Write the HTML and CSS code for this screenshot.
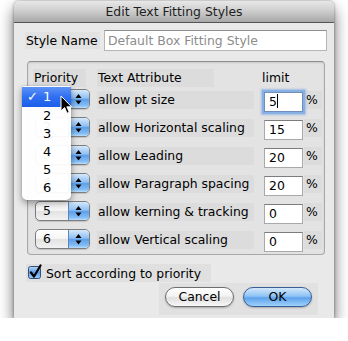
FILE: index.html
```html
<!DOCTYPE html>
<html>
<head>
<meta charset="utf-8">
<link rel="stylesheet" href="styles.css">
</head>
<body>
<div class="window">
  <div class="titlebar">Edit Text Fitting Styles</div>

  <div class="name-row">
    <span class="name-label">Style Name</span>
    <div class="name-field">Default Box Fitting Style</div>
  </div>

  <div class="group">
    <div class="head">
      <span class="h-priority">Priority</span>
      <span class="h-attr">Text Attribute</span>
      <span class="h-limit">limit</span>
    </div>

    <div class="row">
      <div class="popup"><span class="pv">1</span><span class="arrows"><svg width="21" height="18" viewBox="0 0 21 18"><polygon points="7.5,8 10.5,4 13.5,8" fill="#000"/><polygon points="7.5,10.5 10.5,14.5 13.5,10.5" fill="#000"/></svg></span></div>
      <span class="attr">allow pt size</span>
      <div class="num focused">5<span class="caret"></span></div>
      <span class="pct">%</span>
    </div>
    <div class="row">
      <div class="popup"><span class="pv">2</span><span class="arrows"><svg width="21" height="18" viewBox="0 0 21 18"><polygon points="7.5,8 10.5,4 13.5,8" fill="#000"/><polygon points="7.5,10.5 10.5,14.5 13.5,10.5" fill="#000"/></svg></span></div>
      <span class="attr">allow Horizontal scaling</span>
      <div class="num">15</div>
      <span class="pct">%</span>
    </div>
    <div class="row">
      <div class="popup"><span class="pv">3</span><span class="arrows"><svg width="21" height="18" viewBox="0 0 21 18"><polygon points="7.5,8 10.5,4 13.5,8" fill="#000"/><polygon points="7.5,10.5 10.5,14.5 13.5,10.5" fill="#000"/></svg></span></div>
      <span class="attr">allow Leading</span>
      <div class="num">20</div>
      <span class="pct">%</span>
    </div>
    <div class="row">
      <div class="popup"><span class="pv">4</span><span class="arrows"><svg width="21" height="18" viewBox="0 0 21 18"><polygon points="7.5,8 10.5,4 13.5,8" fill="#000"/><polygon points="7.5,10.5 10.5,14.5 13.5,10.5" fill="#000"/></svg></span></div>
      <span class="attr">allow Paragraph spacing</span>
      <div class="num">20</div>
      <span class="pct">%</span>
    </div>
    <div class="row">
      <div class="popup"><span class="pv">5</span><span class="arrows"><svg width="21" height="18" viewBox="0 0 21 18"><polygon points="7.5,8 10.5,4 13.5,8" fill="#000"/><polygon points="7.5,10.5 10.5,14.5 13.5,10.5" fill="#000"/></svg></span></div>
      <span class="attr">allow kerning &amp; tracking</span>
      <div class="num">0</div>
      <span class="pct">%</span>
    </div>
    <div class="row last">
      <div class="popup"><span class="pv">6</span><span class="arrows"><svg width="21" height="18" viewBox="0 0 21 18"><polygon points="7.5,8 10.5,4 13.5,8" fill="#000"/><polygon points="7.5,10.5 10.5,14.5 13.5,10.5" fill="#000"/></svg></span></div>
      <span class="attr">allow Vertical scaling</span>
      <div class="num">0</div>
      <span class="pct">%</span>
    </div>
  </div>

  <div class="sort">
    <svg class="check" width="16" height="16" viewBox="0 0 16 16">
      <defs>
        <linearGradient id="cb" x1="0" y1="0" x2="0" y2="1">
          <stop offset="0" stop-color="#bcd8f6"/>
          <stop offset="0.5" stop-color="#5f9de8"/>
          <stop offset="1" stop-color="#9fcaf6"/>
        </linearGradient>
      </defs>
      <rect x="1.5" y="2.5" width="12" height="12" rx="2" fill="url(#cb)" stroke="#2f4f7a"/>
      <path d="M4 8.5 L7 12.5 L13.5 1.5" fill="none" stroke="#000" stroke-width="2.2" stroke-linecap="round" stroke-linejoin="round"/>
    </svg>
    <span>Sort according to priority</span>
  </div>

  <div class="buttons">
    <div class="btn cancel">Cancel</div>
    <div class="btn ok">OK</div>
  </div>

  <div class="menu">
    <div class="item sel"><span class="tick">✓</span>1</div>
    <div class="item">2</div>
    <div class="item">3</div>
    <div class="item">4</div>
    <div class="item">5</div>
    <div class="item">6</div>
  </div>

  <svg class="cursor" width="13" height="20" viewBox="0 0 13 20">
    <path d="M1 1 L1 16 L4.6 12.6 L7 18.3 L9.3 17.3 L6.9 11.8 L11.6 11.8 Z" fill="#000" stroke="#fff" stroke-width="1" stroke-linejoin="round"/>
  </svg>
</div>
</body>
</html>
```

FILE: styles.css
```css
* { box-sizing: border-box; }

body {
  margin: 0;
  background: #ffffff;
  font-family: "DejaVu Sans", "Noto Sans", sans-serif;
  font-size: 12.4px;
  color: #000;
}

.window {
  position: relative;
  margin: 1px 0 0 14px;
  width: 320px;
  height: 317px;
  background: #e9e9e9;
  border-radius: 5px 5px 0 0;
  box-shadow: 0 8px 15px rgba(0, 0, 0, 0.6), 0 0 3px rgba(0, 0, 0, 0.4);
  display: flex;
  flex-direction: column;
}

.titlebar {
  height: 22px;
  line-height: 21px;
  text-align: center;
  color: #1e1e1e;
  background: linear-gradient(#e8e8e8, #cfcfcf 45%, #a8a8a8);
  border-bottom: 1px solid #555;
  border-radius: 5px 5px 0 0;
}

/* Style name */
.name-row {
  display: flex;
  align-items: center;
  margin: 7px 0 0 11px;
  height: 21px;
}
.name-label {
  width: 75px;
  height: 17px;
  line-height: 17px;
  padding-left: 1px;
  background: #e2e2e2;
  margin-right: 4px;
}
.name-field {
  width: 223px;
  height: 21px;
  line-height: 19px;
  padding-left: 3px;
  background: #fff;
  border: 1px solid #b5b5b5;
  border-top-color: #8e8e8e;
  color: #8c8c8c;
}

/* Group box */
.group {
  margin: 10px 0 0 13px;
  width: 298px;
  height: 194px;
  background: #e3e3e3;
  border: 1px solid #a8a8a8;
  border-top-color: #8f8f8f;
  border-radius: 4px;
  padding-top: 7px;
  box-shadow: inset 0 1px 2px rgba(0, 0, 0, 0.12);
}
.head {
  display: flex;
  height: 18px;
  line-height: 18px;
  margin-left: 5px;
}
.h-priority {
  width: 53px;
  padding-left: 1px;
  background: #dcdcdc;
}
.h-attr {
  width: 117px;
  margin-left: 11px;
  padding-left: 1px;
  background: #dcdcdc;
}
.h-limit {
  margin-left: 48px;
}

.row {
  display: flex;
  align-items: flex-start;
  height: 28px;
  margin-left: 7px;
}
.row.last { height: 27px; }

.popup {
  position: relative;
  margin-top: 2px;
  width: 55px;
  height: 20px;
  border: 1px solid #7d7d7d;
  border-radius: 5px;
  background: linear-gradient(#ffffff, #f4f4f4 50%, #e2e2e2 51%, #f2f2f2);
  display: flex;
  overflow: hidden;
  box-shadow: 0 1px 1px rgba(0, 0, 0, 0.15);
}
.pv {
  flex: 1;
  padding-left: 7px;
  line-height: 18px;
}
.arrows {
  width: 21px;
  height: 18px;
  border-left: 1px solid #5f86b8;
  background: linear-gradient(#d6e8fa, #8fc0f4 45%, #5e9fe9 52%, #82bcf4 85%, #b9dcfb);
}
.arrows svg { display: block; margin-left: -1px; }

.attr {
  margin: 4px 0 0 7px;
  width: 157px;
  height: 18px;
  line-height: 18px;
  padding-left: 1px;
  background: #dcdcdc;
}
.num {
  position: relative;
  margin: 5px 0 0 10px;
  width: 39px;
  height: 20px;
  line-height: 18px;
  padding-left: 4px;
  background: #fff;
  border: 1px solid #a9a9a9;
  border-top-color: #7c7c7c;
}
.num.focused {
  border-color: #6f8fb8;
  box-shadow: 0 0 0 2px #86b0e6, 0 0 2px 3px rgba(120, 165, 225, 0.6);
}
.caret {
  display: inline-block;
  width: 1px;
  height: 14px;
  background: #000;
  vertical-align: -2px;
}
.pct {
  margin: 4px 0 0 1px;
  width: 18px;
  height: 18px;
  line-height: 18px;
  padding-left: 2px;
  background: #dcdcdc;
}

/* Sort checkbox */
.sort {
  display: flex;
  align-items: center;
  margin: 9px 0 0 12px;
  width: 185px;
  height: 18px;
  background: #e0e0e0;
}
.check { margin: -3px 3px 0 1px; flex: none; }

/* Buttons */
.buttons {
  display: flex;
  margin: 1px 0 0 145px;
  width: 159px;
  height: 32px;
  padding: 4px 0 0 6px;
  gap: 9px;
  background: #e1e1e1;
}
.btn {
  width: 69px;
  height: 20px;
  line-height: 18px;
  text-align: center;
  border-radius: 10px;
  box-shadow: 0 1px 2px rgba(0, 0, 0, 0.25);
}
.cancel {
  border: 1px solid #6e6e6e;
  background: linear-gradient(#ffffff, #f3f3f3 45%, #e0e0e0 55%, #f8f8f8);
}
.ok {
  border: 1px solid #3a5f96;
  background: linear-gradient(#d4e8fb, #8ec3f4 45%, #5ea2ec 55%, #9fd2fb);
}

/* Dropdown menu */
.menu {
  position: absolute;
  left: 8px;
  top: 85px;
  width: 49px;
  height: 114px;
  padding: 1px 0 3px;
  background: rgba(255, 255, 255, 0.95);
  border-radius: 2px 2px 5px 5px;
  box-shadow: 0 3px 7px rgba(0, 0, 0, 0.4), 0 0 1px rgba(0, 0, 0, 0.4);
}
.item {
  position: relative;
  height: 18px;
  line-height: 18px;
  padding-left: 21px;
  font-size: 13px;
}
.item.sel {
  height: 20px;
  line-height: 20px;
  color: #fff;
  background: linear-gradient(#5d92f7, #2f6ff1 50%, #1a5fea);
}
.tick {
  position: absolute;
  left: 5px;
  top: 0;
}

.cursor {
  position: absolute;
  left: 46px;
  top: 94px;
}
```
